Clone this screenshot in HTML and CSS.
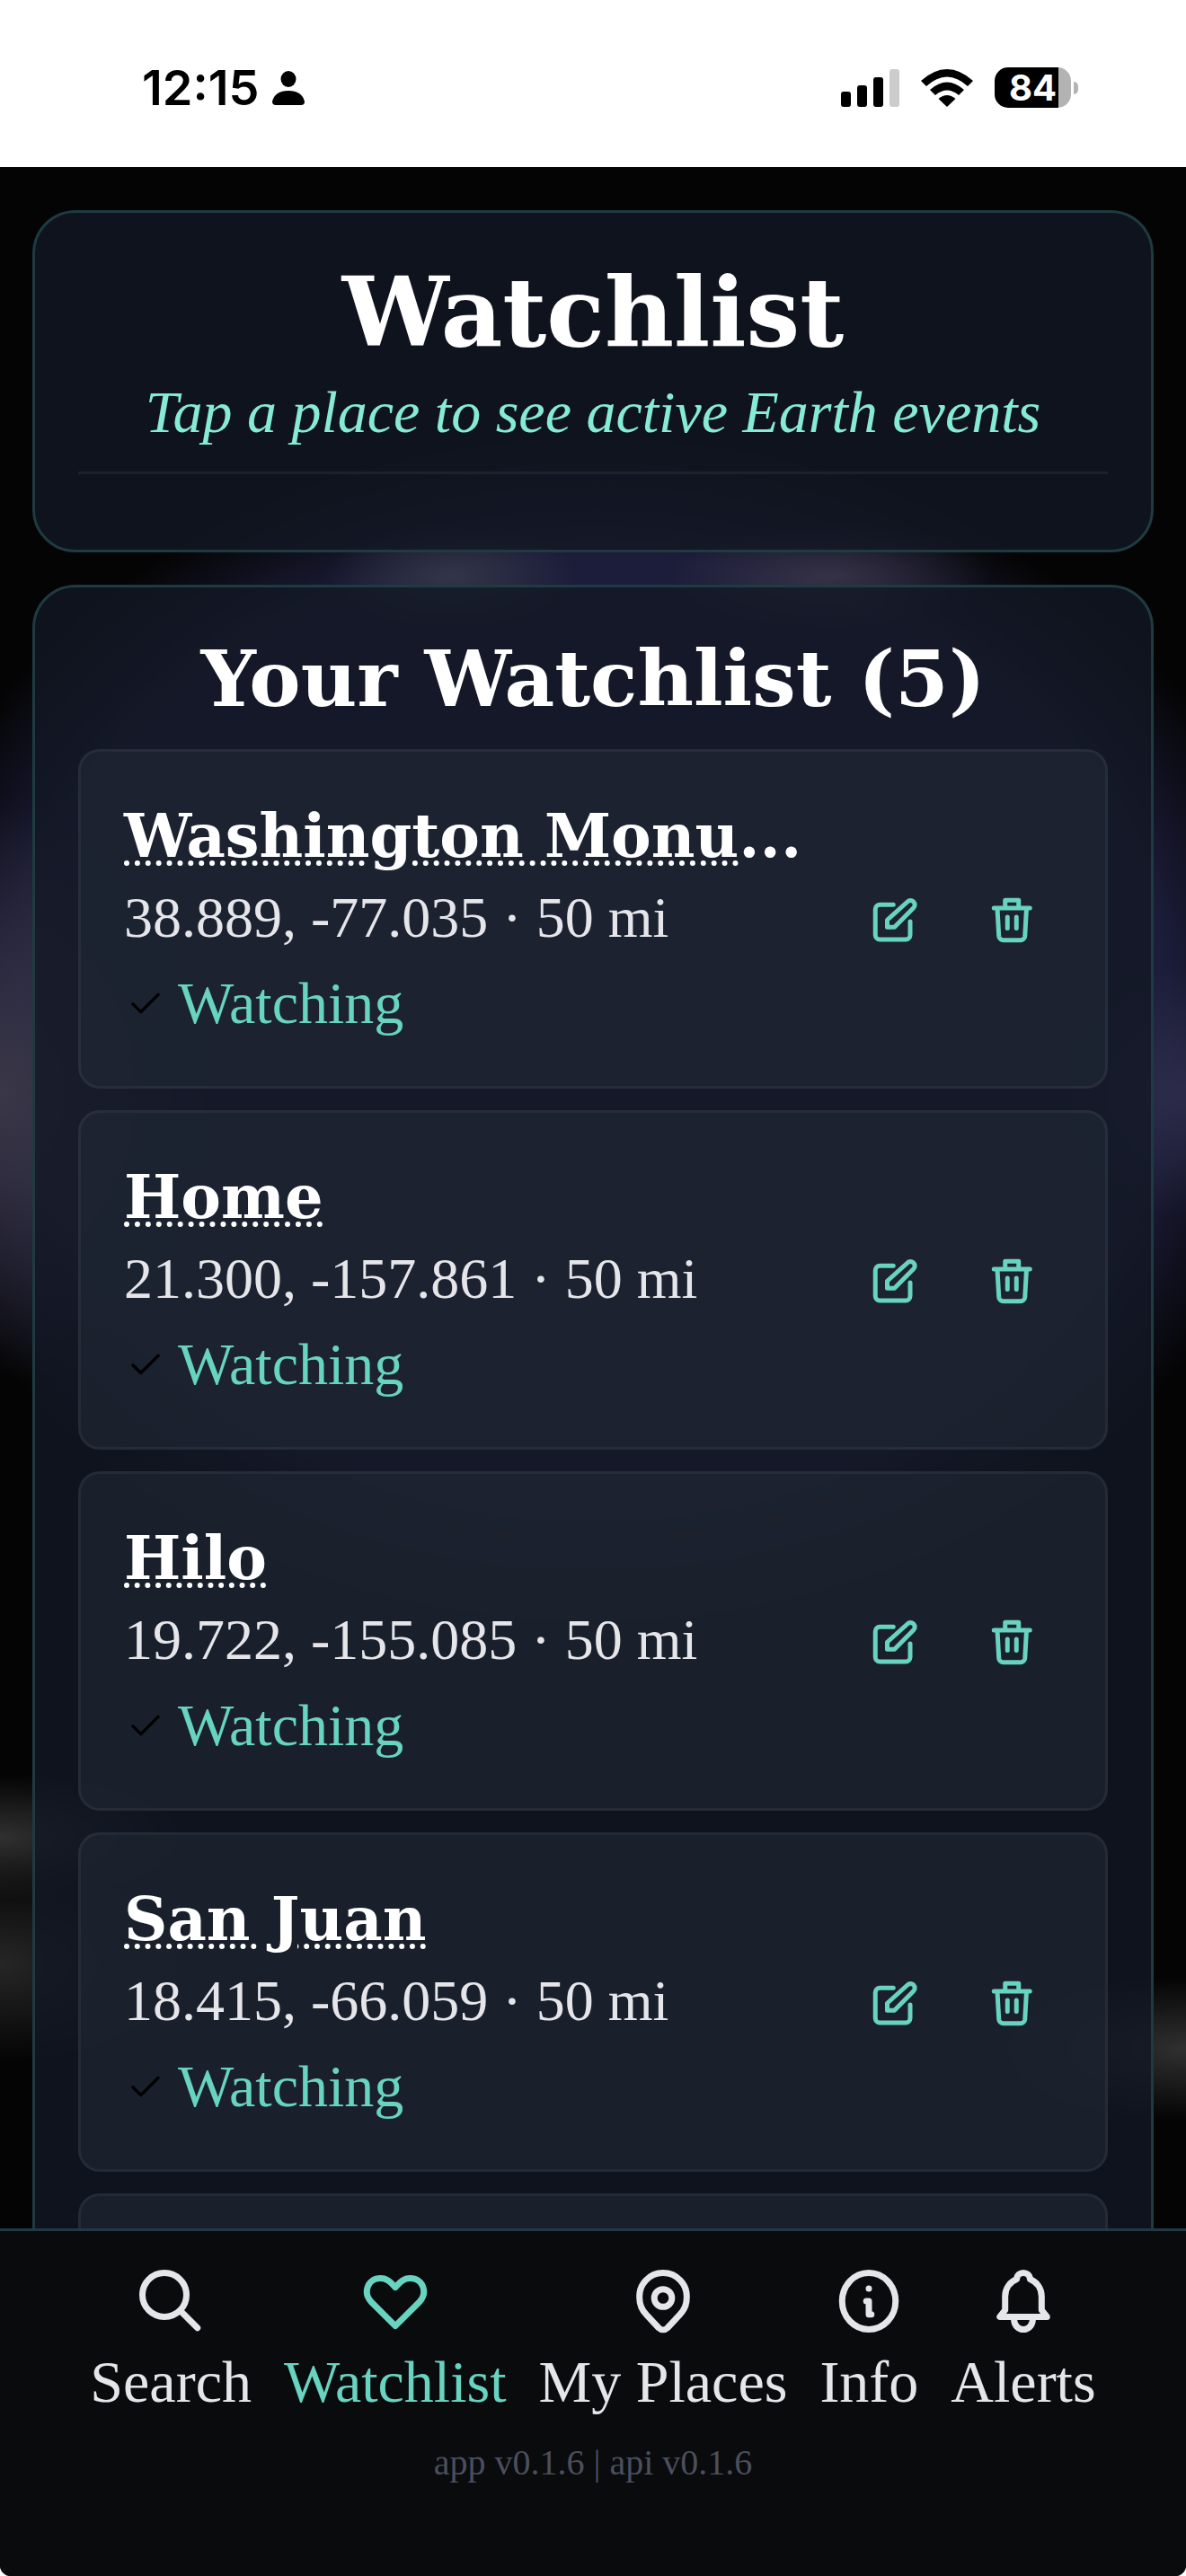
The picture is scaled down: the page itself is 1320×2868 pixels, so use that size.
FILE: index.html
```
<!DOCTYPE html>
<html lang="en">
<head>
    <meta charset="UTF-8">
    <meta name="viewport" content="width=device-width, initial-scale=1.0">
    <title>Watchlist</title>
    <link rel="stylesheet" href="styles.css">
</head>
<body>
    <svg class="sprite" aria-hidden="true">
        <symbol id="icon-edit" viewBox="0 0 24 24">
            <path d="M10.500 4.500H4.500a2 2 0 0 0-2 2V18a2 2 0 0 0 2 2H16a2 2 0 0 0 2-2v-6"/>
            <path d="M16.800 3.200a1.900 1.900 0 0 1 2.700 2.700L11 14.500H7.800v-3.200z"/>
        </symbol>
        <symbol id="icon-trash" viewBox="0 0 24 24">
            <path d="M2.500 6h16M4 6l.7 12.500a2 2 0 0 0 2 1.800h7.600a2 2 0 0 0 2-1.800L17 6M7.500 6V2.500h6V6M8.500 10v5M12.500 10v5"/>
        </symbol>
        <symbol id="icon-check" viewBox="0 0 24 24">
            <path d="M4 12.500l5 5L20 6.500"/>
        </symbol>
    </svg>

    <div class="status-bar">
        <div class="status-time">
            <span>12:15</span>
            <svg class="status-person" viewBox="0 0 36 38" aria-hidden="true">
                <ellipse cx="18" cy="9" rx="8.500" ry="9"/>
                <path d="M4 38Q0 38 0 34Q3 22 18 22T36 34Q36 38 32 38Z"/>
            </svg>
        </div>
        <div class="status-icons">
            <svg class="status-signal" viewBox="0 0 65 42" aria-hidden="true">
                <rect x="0" y="25" width="11" height="17" rx="3"/>
                <rect x="18" y="18" width="11" height="24" rx="3"/>
                <rect x="36" y="9" width="11" height="33" rx="3"/>
                <rect class="dim" x="54" y="0" width="11" height="42" rx="3"/>
            </svg>
            <svg class="status-wifi" viewBox="0 0 58 42" aria-hidden="true">
                <path d="M0 13Q29-13 58 13L52 19Q29-2 6 19Z"/>
                <path d="M10 23Q29 6 48 23L42 29Q29 18 16 29Z"/>
                <path d="M19.500 33Q29 25 38.500 33L29 42Z"/>
            </svg>
            <div class="battery"><span class="battery-level">84</span></div>
        </div>
    </div>

    <div class="app">
        <main class="content">
            <header class="card page-header">
                <h1>Watchlist</h1>
                <p class="subtitle">Tap a place to see active Earth events</p>
            </header>

            <section class="card">
                <h2>Your Watchlist (5)</h2>
                <ul class="places">
                    <li class="place">
                        <div class="place-info">
                            <h3><a href="#">Washington Monu</a>...</h3>
                            <p class="coords">38.889, -77.035 · 50 mi</p>
                            <p class="watching"><svg><use href="#icon-check"/></svg>Watching</p>
                        </div>
                        <button class="icon-btn" aria-label="Edit Washington Monument"><svg><use href="#icon-edit"/></svg></button>
                        <button class="icon-btn" aria-label="Remove Washington Monument"><svg><use href="#icon-trash"/></svg></button>
                    </li>
                    <li class="place">
                        <div class="place-info">
                            <h3><a href="#">Home</a></h3>
                            <p class="coords">21.300, -157.861 · 50 mi</p>
                            <p class="watching"><svg><use href="#icon-check"/></svg>Watching</p>
                        </div>
                        <button class="icon-btn" aria-label="Edit Home"><svg><use href="#icon-edit"/></svg></button>
                        <button class="icon-btn" aria-label="Remove Home"><svg><use href="#icon-trash"/></svg></button>
                    </li>
                    <li class="place">
                        <div class="place-info">
                            <h3><a href="#">Hilo</a></h3>
                            <p class="coords">19.722, -155.085 · 50 mi</p>
                            <p class="watching"><svg><use href="#icon-check"/></svg>Watching</p>
                        </div>
                        <button class="icon-btn" aria-label="Edit Hilo"><svg><use href="#icon-edit"/></svg></button>
                        <button class="icon-btn" aria-label="Remove Hilo"><svg><use href="#icon-trash"/></svg></button>
                    </li>
                    <li class="place">
                        <div class="place-info">
                            <h3><a href="#">San Juan</a></h3>
                            <p class="coords">18.415, -66.059 · 50 mi</p>
                            <p class="watching"><svg><use href="#icon-check"/></svg>Watching</p>
                        </div>
                        <button class="icon-btn" aria-label="Edit San Juan"><svg><use href="#icon-edit"/></svg></button>
                        <button class="icon-btn" aria-label="Remove San Juan"><svg><use href="#icon-trash"/></svg></button>
                    </li>
                    <li class="place"></li>
                </ul>
            </section>
        </main>

        <footer class="tab-bar">
            <nav class="tabs">
                <a href="#" class="tab">
                    <svg viewBox="0 0 24 24"><circle cx="10" cy="10" r="7"/><path d="M15 15l5.500 5.500"/></svg>
                    <span>Search</span>
                </a>
                <a href="#" class="tab active">
                    <svg viewBox="0 0 24 24"><path d="M12 19.900L4.300 12.200C1.600 9.200 3.200 4.700 7.300 4.700c2 0 3.200 1.200 4.700 2.900 1.500-1.700 2.700-2.900 4.700-2.900 4.100 0 5.700 4.500 3 7.500z"/></svg>
                    <span>Watchlist</span>
                </a>
                <a href="#" class="tab">
                    <svg viewBox="0 0 24 24"><path d="M12 3a7.500 7.500 0 0 0-7.500 8c0 2 .8 3.900 2.200 5.300l3.900 4.200a2 2 0 0 0 2.800 0l3.900-4.200c1.400-1.400 2.200-3.300 2.200-5.300a7.500 7.500 0 0 0-7.500-8z"/><circle cx="12" cy="11" r="2.800"/></svg>
                    <span>My Places</span>
                </a>
                <a href="#" class="tab">
                    <svg viewBox="0 0 24 24"><ellipse cx="12" cy="12" rx="8.500" ry="9"/><path d="M11.200 12h.8v4.200h.8M12 8v.01"/></svg>
                    <span>Info</span>
                </a>
                <a href="#" class="tab">
                    <svg viewBox="0 0 24 24"><path d="M4.500 17h15l-1.700-2.200V10.500c0-2.600-1.500-4.600-3.700-5.500 0-2.700-4.200-2.700-4.200 0C7.700 5.900 6.200 7.900 6.200 10.500v4.300zM9 17.500c0 4.700 6 4.700 6 0"/></svg>
                    <span>Alerts</span>
                </a>
            </nav>
            <p class="version">app v0.1.6 | api v0.1.6</p>
        </footer>
    </div>
</body>
</html>
```
FILE: styles.css
```
* {
    margin: 0;
    padding: 0;
    box-sizing: border-box;
}

body {
    background: #fff;
    font-family: "Liberation Serif", serif;
    font-size: 66px;
    color: #e5e5ea;
    height: 100vh;
    display: flex;
    flex-direction: column;
    overflow: hidden;
}

.sprite {
    display: none;
}

svg {
    display: block;
    flex-shrink: 0;
    fill: none;
    stroke: currentColor;
    stroke-width: 2;
    stroke-linecap: round;
    stroke-linejoin: round;
}

/* phone status bar */
.status-bar {
    flex-shrink: 0;
    height: 186px;
    padding: 9px 120px 0 158px;
    display: flex;
    justify-content: space-between;
    align-items: center;
    color: #000;
    font-family: Inter, sans-serif;
}

.status-time {
    display: flex;
    align-items: center;
    gap: 14px;
    font-size: 54px;
    font-weight: 600;
}

.status-bar svg {
    fill: #000;
    stroke: none;
}

.status-person {
    width: 36px;
    height: 38px;
}

.status-icons {
    display: flex;
    align-items: center;
    gap: 24px;
}

.status-signal {
    width: 65px;
    height: 42px;
}

.status-signal .dim {
    fill: #ccc;
}

.status-wifi {
    width: 58px;
    height: 42px;
}

.battery {
    position: relative;
    width: 85px;
    height: 45px;
    border-radius: 15px;
    background: linear-gradient(to right, #000 84%, #b3b3b3 84%);
    display: flex;
    align-items: center;
    justify-content: center;
    margin-right: 8px;
}

.battery::after {
    content: "";
    position: absolute;
    right: -8px;
    top: 16px;
    width: 5px;
    height: 14px;
    border-radius: 0 5px 5px 0;
    background: #b3b3b3;
}

.battery-level {
    color: #fff;
    font-size: 40px;
    font-weight: 700;
}

/* app with the out of focus globe behind it */
.app {
    flex: 1;
    min-height: 0;
    display: flex;
    flex-direction: column;
    border-radius: 0 0 12px 12px;
    overflow: hidden;
    background:
        radial-gradient(ellipse 140px 60px at 38% 455px, rgba(60, 64, 78, 0.7), transparent),
        radial-gradient(ellipse 180px 60px at 70% 455px, rgba(66, 60, 80, 0.7), transparent),
        radial-gradient(ellipse 240px 320px at 0 1030px, rgba(62, 58, 74, 0.9), transparent),
        radial-gradient(ellipse 140px 140px at 100% 1030px, rgba(52, 52, 84, 0.7), transparent),
        radial-gradient(ellipse 200px 70px at 0 1860px, #303030, transparent),
        radial-gradient(ellipse 200px 110px at 0 2000px, #262626, transparent),
        radial-gradient(ellipse 200px 80px at 100% 2095px, #303030, transparent),
        radial-gradient(ellipse 800px 660px at 50% 960px, #1c1d3a 80%, transparent),
        #040404;
}

.content {
    flex: 1;
    min-height: 0;
    overflow: hidden;
    padding: 48px 36px 0;
    display: flex;
    flex-direction: column;
    gap: 36px;
}

.card {
    flex-shrink: 0;
    background: rgba(19, 24, 36, 0.8);
    border: 3px solid #1d3b40;
    border-radius: 48px;
    padding: 48px;
}

.page-header {
    height: 381px;
}

h1,
h2,
h3 {
    font-family: "DejaVu Serif", serif;
    font-weight: 700;
    color: #fff;
}

h1 {
    font-size: 106px;
    line-height: 126px;
    text-align: center;
}

.subtitle {
    padding: 6px 0 24px;
    border-bottom: 3px solid rgba(255, 255, 255, 0.06);
    font-style: italic;
    line-height: 84px;
    text-align: center;
    color: #86ead4;
}

h2 {
    font-size: 86px;
    line-height: 108px;
    margin-bottom: 24px;
    text-align: center;
}

.places {
    list-style: none;
    display: flex;
    flex-direction: column;
    gap: 24px;
}

.place {
    height: 378px;
    padding: 54px 34px 48px 48px;
    display: flex;
    align-items: center;
    background: rgba(33, 41, 53, 0.6);
    border: 3px solid rgba(255, 255, 255, 0.05);
    border-radius: 24px;
}

.place-info {
    flex: 1;
    min-width: 0;
}

h3 {
    font-size: 67px;
    line-height: 90px;
    white-space: nowrap;
}

h3 a {
    color: inherit;
    text-decoration: underline dotted 6px;
    text-underline-offset: 4px;
}

.coords {
    font-size: 64px;
    line-height: 92px;
}

.watching {
    display: flex;
    align-items: center;
    gap: 12px;
    line-height: 98px;
    color: #68d3c0;
}

.watching svg {
    width: 48px;
    height: 42px;
    color: #000;
}

.icon-btn {
    width: 132px;
    height: 96px;
    display: flex;
    align-items: center;
    justify-content: center;
    background: none;
    border: none;
    color: #68d3c0;
}

.icon-btn svg {
    width: 60px;
    height: 60px;
}

/* bottom navigation */
.tab-bar {
    flex-shrink: 0;
    padding: 36px 84px 99px;
    background: #0a0b0c;
    border-top: 3px solid #233747;
}

.tabs {
    display: flex;
    justify-content: center;
    gap: 36px;
}

.tab {
    display: flex;
    flex-direction: column;
    align-items: center;
    gap: 6px;
    line-height: 84px;
    color: #e5e5ea;
    text-decoration: none;
}

.tab.active {
    color: #68d3c0;
}

.tab svg {
    width: 84px;
    height: 84px;
}

.version {
    margin-top: 21px;
    font-size: 40px;
    line-height: 54px;
    text-align: center;
    color: #4a4f5e;
}
```
